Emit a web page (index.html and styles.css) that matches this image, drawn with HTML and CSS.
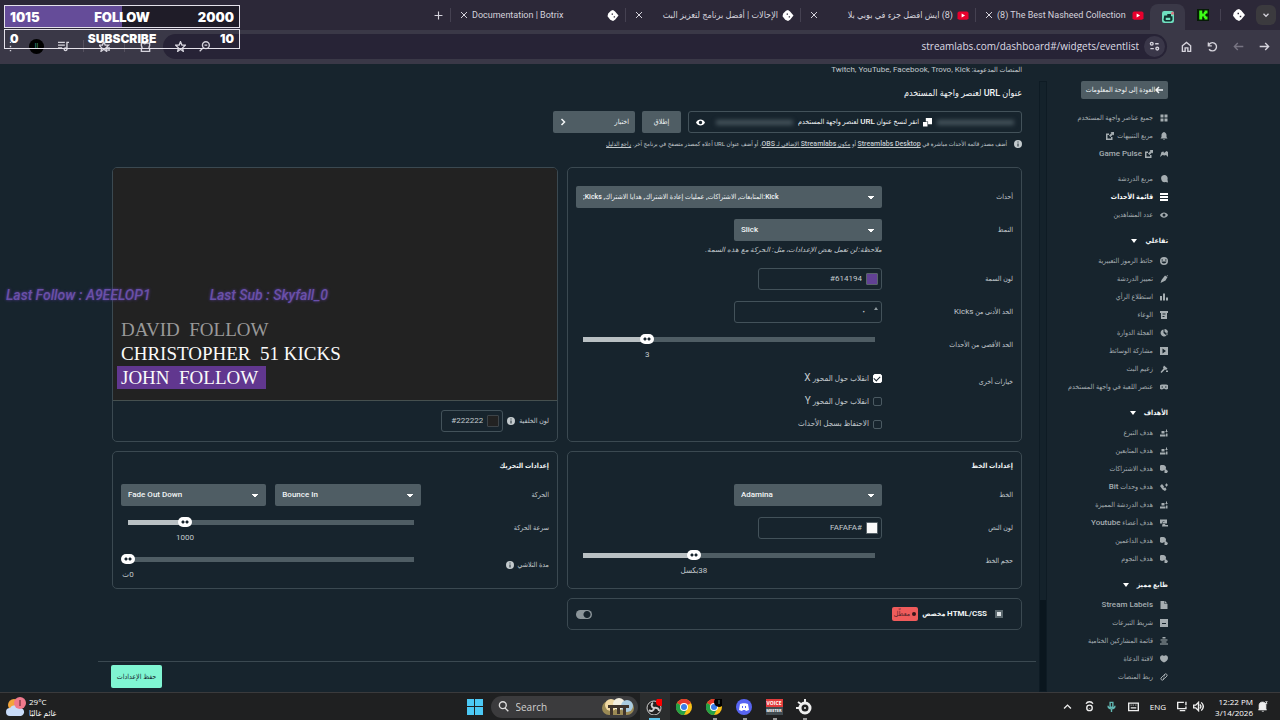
FILE: index.html
```html
<!DOCTYPE html>
<html lang="ar" dir="rtl">
<head>
    <meta charset="UTF-8">
    <meta name="viewport" content="width=device-width, initial-scale=1.0">
    <title>Streamlabs - قائمة الأحداث</title>
    <link rel="stylesheet" href="styles.css">
</head>
<body>
    <svg class="symbols" aria-hidden="true">
        <symbol id="i-grid" viewBox="0 0 16 16"><path d="M1 1h6v6H1zM9 1h6v6H9zM1 9h6v6H1zM9 9h6v6H9z"/></symbol>
        <symbol id="i-bell" viewBox="0 0 16 16"><path d="M8 0c3 1 5 3 5 6v4l2 3H1l2-3V6c0-3 2-5 5-6zM6 14h4l-2 2z"/></symbol>
        <symbol id="i-game" viewBox="0 0 16 16"><path d="M0 14 3 4l4-1 1 3 5-4 3 2v10l-4-4-3 1-4-1z"/></symbol>
        <symbol id="i-chat" viewBox="0 0 16 16"><path d="M8 0a7 7 0 0 1 7 9l1 6-5-1A7 7 0 1 1 8 0z"/></symbol>
        <symbol id="i-list" viewBox="0 0 16 16"><path d="M0 0h16v4H0zM0 6h16v4H0zM0 12h16v4H0z"/></symbol>
        <symbol id="i-eye" viewBox="0 0 16 16"><path fill-rule="evenodd" d="M0 8c3-7 13-7 16 0-3 7-13 7-16 0zm5 0a3 3 0 1 0 6 0 3 3 0 0 0-6 0z"/></symbol>
        <symbol id="i-smile" viewBox="0 0 16 16"><path fill-rule="evenodd" d="M8 0a8 8 0 1 1 0 16A8 8 0 0 1 8 0zM3 5v2h3V5zm7 0v2h3V5zM3 9c1 5 9 5 10 0z"/></symbol>
        <symbol id="i-pen" viewBox="0 0 16 16"><path d="m10 1 5 3-4 7-6 3-4 2 2-6zM15 0l1 3-3-2z"/></symbol>
        <symbol id="i-bars" viewBox="0 0 16 16"><path d="M0 6h4v9H0zM6 1h4v14H6zM12 9h4v6h-4z"/></symbol>
        <symbol id="i-jar" viewBox="0 0 16 16"><path fill-rule="evenodd" d="M0 0h16v4h-2v12H2V4H0zm5 5v2h6V5zm0 5v2h4v-2z"/></symbol>
        <symbol id="i-wheel" viewBox="0 0 16 16"><path d="M7 1v7l6 5A7 7 0 1 1 7 1zM9 0c4 0 7 3 7 7l-4 1-3-3zM12 9h4l-2 4z"/></symbol>
        <symbol id="i-play" viewBox="0 0 16 16"><path fill-rule="evenodd" d="M0 0h16v16H0zm5 3v10l7-5z"/></symbol>
        <symbol id="i-axe" viewBox="0 0 16 16"><path d="m8 1 7 6-3 3-2-1-7 7-2-2 6-7-1-2zM12 11h4v3h-4z"/></symbol>
        <symbol id="i-pad" viewBox="0 0 16 16"><path fill-rule="evenodd" d="M4 3h8a5 5 0 0 1 0 10L8 11l-4 2A5 5 0 0 1 4 3zM3 7v2h3V7zm7 0v2h3V7z"/></symbol>
        <symbol id="i-goal" viewBox="0 0 16 16"><path d="M3 4h6v5H3zM0 11h11v4H0zM12 1h2v3h2l-3 3-3-3h2zM12 9h3v6h-3z"/></symbol>
        <symbol id="i-coins" viewBox="0 0 16 16"><path d="M6 0a6 6 0 0 1 6 7l-5 4A6 6 0 1 1 6 0zM9 9l3-1 1 2 3 2-2 4H9z"/></symbol>
        <symbol id="i-bits" viewBox="0 0 16 16"><path d="m4 2 4 5-1 3 4-1 2 4-3 3-5-3-5-7zM12 1h2v2h2v2h-2v2h-2V5h-2V3h2z"/></symbol>
        <symbol id="i-member" viewBox="0 0 16 16"><path d="M0 1h14v8H9V5H5v4H0zM6 6h3v3H6zM5 10h5l1 2h5v3H4z"/></symbol>
        <symbol id="i-page" viewBox="0 0 16 16"><path d="M1 0h8v6h6v10H1zM10 0l5 5h-5z"/></symbol>
        <symbol id="i-box" viewBox="0 0 16 16"><path fill-rule="evenodd" d="M0 0h16v16H0zm4 8v2h8V8z"/></symbol>
        <symbol id="i-credits" viewBox="0 0 16 16"><path d="M5 0h6v3H5zM1 5h14v2H1zM3 9h10v2H3zM0 13h16v2H0z"/></symbol>
        <symbol id="i-heart" viewBox="0 0 16 16"><path d="M8 2c3-3 8-1 8 4 0 4-4 7-8 9C4 13 0 10 0 6c0-5 5-7 8-4z"/></symbol>
        <symbol id="i-link" viewBox="0 0 16 16"><path fill="none" stroke="currentColor" stroke-width="2" d="M7 5l3-3a3 3 0 0 1 4 4l-4 4a3 3 0 0 1-4 0M9 11l-3 3a3 3 0 0 1-4-4l4-4a3 3 0 0 1 4 0"/></symbol>
        <symbol id="i-ext" viewBox="0 0 16 16"><path d="M9 0h7v7l-2-2-5 5-3-3 5-5zM0 3h6v3H3v7h7v-3h3v6H0z"/></symbol>
        <symbol id="i-copy" viewBox="0 0 16 16"><path d="M5 0h11v11H9V6H5zM0 7h8v8H0z"/></symbol>
        <symbol id="i-info" viewBox="0 0 16 16"><path fill-rule="evenodd" d="M8 0a8 8 0 1 1 0 16A8 8 0 0 1 8 0zM7 3v2h2V3zm0 4v6h2V7z"/></symbol>
        <symbol id="i-x" viewBox="0 0 16 16"><path fill="none" stroke="currentColor" stroke-width="2" d="m2 2 12 12M14 2 2 14"/></symbol>
        <symbol id="i-botrix" viewBox="0 0 16 16"><path fill-rule="evenodd" d="m8 0 3 2 5 6-5 6-3 2-4-2-4-5 1-4 4-4zM6 5v2h2V5zm3 4v2h2V9z"/></symbol>
        <symbol id="i-yt" viewBox="0 0 16 16"><path fill="#e8002d" d="M2 2h12l2 2v8l-2 2H2l-2-2V4z"/><path fill="#fff" d="M6 5v6l5-3z"/></symbol>
        <symbol id="i-chrome" viewBox="0 0 16 16"><circle cx="8" cy="8" r="8" fill="#fbc116"/><path fill="#e33b2e" d="M8 8 1 4a8 8 0 0 1 14 0z"/><path fill="#24a148" d="M1 4a8 8 0 0 0 7 12l3-6z"/><circle cx="8" cy="8" r="4" fill="#fff"/><circle cx="8" cy="8" r="3" fill="#3b7de9"/></symbol>
    </svg>

    <header class="browser">
        <nav class="tabs">
            <button class="tab-menu" aria-label="البحث في علامات التبويب"><svg viewBox="0 0 16 16"><path fill="none" stroke="currentColor" stroke-width="2" d="m4 6 4 4 4-4"/></svg></button>
            <a href="#" class="tab-pin"><svg><use href="#i-botrix"/></svg></a>
            <i class="tab-sep"></i>
            <a href="#" class="tab-pin"><svg viewBox="0 0 16 16"><path fill="#061b06" d="M0 0h16v16H0z"/><path fill="#3dfc16" d="M3 2h4v4h2V4h1V2h4v4h-2v1h-1v2h1v1h2v4h-4v-2H9v-2H7v4H3z"/></svg></a>
            <a href="#" class="tab-pin active"><svg viewBox="0 0 16 16"><rect width="16" height="16" rx="3" fill="#6fe0c0"/><path fill="#12332f" fill-rule="evenodd" d="M3 6h4V4h5v3h2v5l-2 2H4l-2-2zm2 3v3h6V9z"/><circle cx="14" cy="3" r="2" fill="#d97580"/></svg></a>
            <div class="tab"><svg class="fav"><use href="#i-yt"/></svg><a href="#" dir="ltr">(8) The Best Nasheed Collection</a><button aria-label="إغلاق"><svg><use href="#i-x"/></svg></button></div>
            <div class="tab"><svg class="fav"><use href="#i-yt"/></svg><a href="#">(8) ايش افضل جزء في بوبي بلا</a><button aria-label="إغلاق"><svg><use href="#i-x"/></svg></button></div>
            <div class="tab"><svg class="fav"><use href="#i-botrix"/></svg><a href="#">الإحالات | أفضل برنامج لتعزيز البث</a><button aria-label="إغلاق"><svg><use href="#i-x"/></svg></button></div>
            <div class="tab"><svg class="fav"><use href="#i-botrix"/></svg><a href="#" dir="ltr">Documentation | Botrix</a><button aria-label="إغلاق"><svg><use href="#i-x"/></svg></button></div>
            <button class="tab-new" aria-label="علامة تبويب جديدة"><svg viewBox="0 0 16 16"><path fill="none" stroke="currentColor" stroke-width="2" d="M8 1v14M1 8h14"/></svg></button>
        </nav>
        <div class="toolbar">
            <button aria-label="رجوع"><svg viewBox="0 0 16 16"><path d="M1 8h13M9 3l5 5-5 5"/></svg></button>
            <button class="dim" aria-label="تقدم"><svg viewBox="0 0 16 16"><path d="M15 8H2M7 3 2 8l5 5"/></svg></button>
            <button aria-label="إعادة التحميل"><svg viewBox="0 0 16 16"><path d="M2 2v5h5M2 7a6 6 0 1 1 1 5"/></svg></button>
            <button aria-label="الصفحة الرئيسية"><svg viewBox="0 0 16 16"><path d="M2 7l6-5 6 5v8h-4v-5H6v5H2z"/></svg></button>
            <div class="omnibox">
                <button class="site" aria-label="معلومات الموقع"><svg viewBox="0 0 16 16"><circle cx="4" cy="4" r="2"/><path d="M9 4h5M2 11h5"/><circle cx="12" cy="11" r="2"/></svg></button>
                <input type="text" dir="ltr" aria-label="العنوان" value="streamlabs.com/dashboard#/widgets/eventlist">
                <button aria-label="تصغير"><svg viewBox="0 0 16 16"><circle cx="10" cy="6" r="5"/><path d="M8 6h4M6 10l-5 5"/></svg></button>
                <button aria-label="إشارة مرجعية"><svg viewBox="0 0 16 16"><path d="m8 1 2 5h5l-4 4 1 5-4-3-4 3 1-5-4-4h5z"/></svg></button>
            </div>
            <div class="extras">
                <button aria-label="الإضافات"><svg viewBox="0 0 16 16"><path d="M2 3h3l2 1 2-1h5v4l-1 2 1 2v4H2v-4l1-2-1-2z"/></svg></button>
                <i></i>
                <button aria-label="المفضلة"><svg viewBox="0 0 16 16"><path d="m7 1 2 5h5l-4 4 1 5-4-3-4 3 1-5-4-4h5zM11 10h5M12 13h4"/></svg></button>
                <i></i>
                <button aria-label="الوسائط"><svg viewBox="0 0 16 16"><path d="M0 2h10M0 6h10M0 10h6M13 12V2h3"/><circle cx="11" cy="12" r="2"/></svg></button>
                <button class="avatar" aria-label="الملف الشخصي">ll</button>
                <button class="menu" aria-label="القائمة"><svg viewBox="0 0 16 16"><path d="M8 1v2M8 7v2M8 13v2"/></svg></button>
            </div>
        </div>
    </header>

    <div class="page">
        <aside class="sidebar">
            <button class="back"><svg viewBox="0 0 16 16"><path fill="none" stroke="currentColor" stroke-width="3" d="M16 8H3M8 2 2 8l6 6"/></svg>العودة إلى لوحة المعلومات</button>
            <ul>
                <li><a href="#"><svg><use href="#i-grid"/></svg>جميع عناصر واجهة المستخدم</a></li>
                <li><a href="#"><svg><use href="#i-bell"/></svg>مربع التنبيهات <svg class="ext"><use href="#i-ext"/></svg></a></li>
                <li><a href="#"><svg><use href="#i-game"/></svg><svg><use href="#i-ext"/></svg><span class="en pulse">Game Pulse</span></a></li>
            </ul>
            <ul>
                <li><a href="#"><svg><use href="#i-chat"/></svg>مربع الدردشة</a></li>
                <li><a href="#" class="current"><svg><use href="#i-list"/></svg>قائمة الأحداث</a></li>
                <li><a href="#"><svg><use href="#i-eye"/></svg>عدد المشاهدين</a></li>
            </ul>
            <h2>تفاعلي</h2>
            <ul>
                <li><a href="#"><svg><use href="#i-smile"/></svg>حائط الرموز التعبيرية</a></li>
                <li><a href="#"><svg><use href="#i-pen"/></svg>تمييز الدردشة</a></li>
                <li><a href="#"><svg><use href="#i-bars"/></svg>استطلاع الرأي</a></li>
                <li><a href="#"><svg><use href="#i-jar"/></svg>الوعاء</a></li>
                <li><a href="#"><svg><use href="#i-wheel"/></svg>العجلة الدوارة</a></li>
                <li><a href="#"><svg><use href="#i-play"/></svg>مشاركة الوسائط</a></li>
                <li><a href="#"><svg><use href="#i-axe"/></svg>زعيم البث</a></li>
                <li><a href="#"><svg><use href="#i-pad"/></svg>عنصر اللعبة في واجهة المستخدم</a></li>
            </ul>
            <h2>الأهداف</h2>
            <ul>
                <li><a href="#"><svg><use href="#i-goal"/></svg>هدف التبرع</a></li>
                <li><a href="#"><svg><use href="#i-goal"/></svg>هدف المتابعين</a></li>
                <li><a href="#"><svg><use href="#i-coins"/></svg>هدف الاشتراكات</a></li>
                <li><a href="#"><svg><use href="#i-bits"/></svg><span>هدف وحدات <span class="en">Bit</span></span></a></li>
                <li><a href="#"><svg><use href="#i-goal"/></svg>هدف الدردشة المميزة</a></li>
                <li><a href="#"><svg><use href="#i-member"/></svg><span>هدف أعضاء <span class="en">Youtube</span></span></a></li>
                <li><a href="#"><svg><use href="#i-coins"/></svg>هدف الداعمين</a></li>
                <li><a href="#"><svg><use href="#i-coins"/></svg>هدف النجوم</a></li>
            </ul>
            <h2>طابع مميز</h2>
            <ul>
                <li><a href="#"><svg><use href="#i-page"/></svg><span class="en">Stream Labels</span></a></li>
                <li><a href="#"><svg><use href="#i-box"/></svg>شريط التبرعات</a></li>
                <li><a href="#"><svg><use href="#i-credits"/></svg>قائمة المشاركين الختامية</a></li>
                <li><a href="#"><svg><use href="#i-heart"/></svg>لافتة الدعاة</a></li>
                <li><a href="#"><svg><use href="#i-link"/></svg>ربط المنصات</a></li>
            </ul>
        </aside>
        <div class="scrollbar"></div>

        <main class="content">
            <p class="platforms">المنصات المدعومة: <span class="en">Twitch, YouTube, Facebook, Trovo, Kick</span></p>
            <h1>عنوان URL لعنصر واجهة المستخدم</h1>
            <div class="url-row">
                <div class="url-box">
                    <i class="secret"></i>
                    <button class="copy"><svg><use href="#i-copy"/></svg><span>انقر لنسخ عنوان <span class="en">URL</span> لعنصر واجهة المستخدم</span></button>
                    <i class="secret"></i>
                    <button class="show" aria-label="إظهار"><svg><use href="#i-eye"/></svg></button>
                </div>
                <button class="btn launch">إطلاق</button>
                <button class="btn test">اختبار<svg viewBox="0 0 16 16"><path fill="none" stroke="currentColor" stroke-width="3" d="m5 2 6 6-6 6"/></svg></button>
            </div>
            <p class="hint"><svg><use href="#i-info"/></svg><span>أضف مصدر قائمة الأحداث مباشرة في <a href="#"><b>Streamlabs Desktop</b></a> أو <a href="#">مكون <b>Streamlabs</b> الإضافي لـ <b>OBS</b></a>، أو أضف عنوان URL أعلاه كمصدر متصفح في برنامج آخر. <a href="#">راجع الدليل</a></span></p>

            <div class="panels">
                <section class="panel">
                    <div class="row">
                        <label for="events">أحداث</label>
                        <div class="field"><select id="events" class="events"><option>Kick:المتابعات, الاشتراكات, عمليات إعادة الاشتراك, هدايا الاشتراك, Kicks;</option></select></div>
                    </div>
                    <div class="row">
                        <label for="theme">النمط</label>
                        <div class="field">
                            <select id="theme" class="half" dir="ltr"><option>Slick</option></select>
                            <p class="note">ملاحظة: لن تعمل بعض الإعدادات، مثل: الحركة مع هذه السمة.</p>
                        </div>
                    </div>
                    <div class="row">
                        <label for="themeColor">لون السمة</label>
                        <div class="field"><div class="color"><i class="swatch theme"></i><input id="themeColor" type="text" value="#614194"></div></div>
                    </div>
                    <div class="row">
                        <label for="minKicks">الحد الأدنى من <span class="en">Kicks</span></label>
                        <div class="field"><div class="number"><i class="spin"></i><input id="minKicks" type="text" value="٠"></div></div>
                    </div>
                    <div class="row">
                        <label for="maxEvents">الحد الأقصى من الأحداث</label>
                        <div class="field slider" dir="ltr" style="--fill: 22%"><input id="maxEvents" type="range" min="0" max="100" value="22"><output>3</output></div>
                    </div>
                    <div class="row">
                        <span class="label">خيارات أخرى</span>
                        <div class="field checks">
                            <label><input type="checkbox" checked><span>انقلاب حول المحور <span class="axis">X</span></span></label>
                            <label><input type="checkbox"><span>انقلاب حول المحور <span class="axis">Y</span></span></label>
                            <label><input type="checkbox">الاحتفاظ بسجل الأحداث</label>
                        </div>
                    </div>
                </section>

                <section class="panel preview">
                    <div class="stage" dir="ltr">
                        <p class="old">DAVID&nbsp; FOLLOW</p>
                        <p>CHRISTOPHER&nbsp; 51 KICKS</p>
                        <p class="new">JOHN&nbsp; FOLLOW</p>
                    </div>
                    <div class="stage-bar">
                        <label for="bgColor">لون الخلفية</label>
                        <svg><use href="#i-info"/></svg>
                        <div class="color small"><i class="swatch bg"></i><input id="bgColor" type="text" value="#222222"></div>
                    </div>
                </section>

                <section class="panel titled">
                    <h3>إعدادات الخط</h3>
                    <div class="row">
                        <label for="font">الخط</label>
                        <div class="field"><select id="font" class="half" dir="ltr"><option>Adamina</option></select></div>
                    </div>
                    <div class="row">
                        <label for="textColor">لون النص</label>
                        <div class="field"><div class="color"><i class="swatch text"></i><input id="textColor" type="text" value="#FAFAFA"></div></div>
                    </div>
                    <div class="row">
                        <label for="fontSize">حجم الخط</label>
                        <div class="field slider" dir="ltr" style="--fill: 38%"><input id="fontSize" type="range" min="0" max="100" value="38"><output dir="rtl">38بكسل</output></div>
                    </div>
                </section>

                <section class="panel titled">
                    <h3>إعدادات التحريك</h3>
                    <div class="row">
                        <label for="animIn">الحركة</label>
                        <div class="field pair">
                            <select id="animIn" dir="ltr"><option>Bounce In</option></select>
                            <select aria-label="حركة الخروج" dir="ltr"><option>Fade Out Down</option></select>
                        </div>
                    </div>
                    <div class="row">
                        <label for="speed">سرعة الحركة</label>
                        <div class="field slider" dir="ltr" style="--fill: 20%"><input id="speed" type="range" min="0" max="100" value="20"><output>1000</output></div>
                    </div>
                    <div class="row">
                        <label for="fadeTime">مدة التلاشي <svg><use href="#i-info"/></svg></label>
                        <div class="field slider" dir="ltr" style="--fill: 0%"><input id="fadeTime" type="range" min="0" max="100" value="0"><output dir="rtl">0ث</output></div>
                    </div>
                </section>

                <section class="panel custom">
                    <i class="plus"></i>
                    <label for="customCode"><span class="en">HTML/CSS</span> مخصص</label>
                    <span class="badge">معطّل</span>
                    <input id="customCode" type="checkbox" class="switch">
                </section>
            </div>

            <footer class="save-bar"><button class="save">حفظ الإعدادات</button></footer>
        </main>
    </div>

    <footer class="taskbar" dir="ltr">
        <div class="weather">
            <svg viewBox="0 0 20 20"><circle cx="8" cy="8" r="6" fill="#f3a43b"/><path fill="#c9dcfa" d="M4 19a4 4 0 0 1 0-8 5 5 0 0 1 9 0 4 4 0 0 1 2 8z"/><circle cx="14" cy="6" r="6" fill="#f0798d"/><path stroke="#54202b" d="M14 3v6"/></svg>
            <div><b>29°C</b><span>غائم غالبًا</span></div>
        </div>
        <div class="apps">
            <button aria-label="Start"><svg viewBox="0 0 16 16"><path fill="#4cc9f5" d="M0 0h7v7H0zM8 0h8v7H8zM0 8h7v8H0zM8 8h8v8H8z"/></svg></button>
            <div class="search">
                <svg viewBox="0 0 16 16"><circle cx="7" cy="6" r="5" fill="none" stroke="#ddd" stroke-width="2"/><path stroke="#ddd" stroke-width="2" d="m10 10 5 5"/></svg>
                <input type="text" placeholder="Search" aria-label="Search">
                <svg class="art" viewBox="0 0 32 18"><rect y="3" width="32" height="14" rx="7" fill="#9b8a55"/><circle cx="9" cy="7" r="6" fill="#f0d9a4"/><circle cx="17" cy="6" r="6" fill="#f4efe0"/><circle cx="25" cy="8" r="6" fill="#a9cbe0"/><path fill="#3f342c" d="M6 7h21v3h-3v7h-3v-7h-3v6h-3v-6h-4v7H8v-7H6z"/></svg>
            </div>
            <button class="open" aria-label="OBS"><svg viewBox="0 0 16 16"><circle cx="8" cy="9" r="7" fill="#222" stroke="#ccc"/><path fill="none" stroke="#ccc" stroke-width="2" d="M8 9c-3-1-3-4-1-5M8 9c3-1 5 1 5 3M8 9c0 3-3 4-5 2"/><circle cx="14" cy="3" r="4" fill="#f00"/></svg></button>
            <button aria-label="Chrome"><svg><use href="#i-chrome"/></svg></button>
            <button class="running" aria-label="Chrome 2"><svg viewBox="0 0 16 16"><use href="#i-chrome"/><circle cx="13" cy="3" r="5" fill="#000"/><path stroke="#4d8276" d="M13 1v4"/></svg></button>
            <button class="running" aria-label="Discord"><svg viewBox="0 0 16 16"><circle cx="8" cy="8" r="8" fill="#5865f2"/><path fill="#fff" fill-rule="evenodd" d="M4 5c2-1 6-1 8 0l1 6-3 1-1-1H7l-1 1-3-1zm2 2v2h1V7zm3 0v2h1V7z"/></svg></button>
            <button class="running vm" aria-label="Voicemeeter"><b>VOICE</b><b>MEETER</b></button>
            <button class="running" aria-label="SteelSeries"><svg viewBox="0 0 16 16"><circle cx="9" cy="9" r="5" fill="none" stroke="#eee" stroke-width="3"/><circle cx="9" cy="9" r="1" fill="#eee"/><path stroke="#eee" stroke-width="2" d="M9 0v4M0 9h4M2 3l3 2"/></svg></button>
        </div>
        <div class="tray">
            <svg viewBox="0 0 16 16"><path d="m3 11 5-5 5 5"/></svg>
            <svg viewBox="0 0 16 16"><circle cx="8" cy="10" r="4"/><path d="M3 4c2-4 8-4 10 0M8 10v1"/></svg>
            <svg class="mic" viewBox="0 0 16 16"><path d="M6 2h4v7H6zM3 7c0 6 10 6 10 0M8 12v4"/></svg>
            <svg viewBox="0 0 16 16"><path d="M1 3h14v11H1zM4 6h1M7 6h1M11 6h1M4 10h8"/></svg>
            <span class="lang">ENG</span>
            <svg viewBox="0 0 16 16"><path d="M10 2H1v9h12V8M4 14h8M13 1v5"/></svg>
            <svg class="volume" viewBox="0 0 16 16"><path d="M1 6h3l4-4v12l-4-4H1zM10 5c2 2 2 4 0 6M12 2c4 4 4 8 0 12"/></svg>
            <div class="clock"><span>12:22 PM</span><span>3/14/2026</span></div>
            <svg class="notify" viewBox="0 0 16 16"><path fill="#eee" d="M3 12V6c0-6 10-6 10 0v6l1 1H2zM7 15h3M12 1h3l-3 3h3"/></svg>
        </div>
    </footer>

    <!-- stream overlay -->
    <div class="goals" dir="ltr">
        <div class="goal follow"><b>1015</b><b>FOLLOW</b><b>2000</b></div>
        <div class="goal subs"><b>0</b><b>SUBSCRIBE</b><b>10</b></div>
    </div>
    <div class="latest" dir="ltr"><span>Last Follow : A9EELOP1</span><span>Last Sub : Skyfall_0</span></div>
</body>
</html>
```
FILE: styles.css
```css
* {
    box-sizing: border-box;
}
body {
    margin: 0;
    min-height: 100vh;
    display: flex;
    flex-direction: column;
    background: #17242d;
    color: #c3cacd;
    font-family: Roboto, "DejaVu Sans Condensed", "DejaVu Sans", sans-serif;
    font-size: 7px;
    line-height: 12px;
}
h1, h2, h3, p, ul {
    margin: 0;
    padding: 0;
}
ul {
    list-style: none;
}
a {
    color: inherit;
}
button, input, select {
    font: inherit;
    color: inherit;
    margin: 0;
    padding: 0;
    border: 0;
    background: none;
}
input {
    min-width: 0;
}
svg {
    fill: currentColor;
    flex: none;
}
.symbols {
    position: absolute;
    width: 0;
    height: 0;
}
.en {
    font-size: 8px;
}

/* browser */
.browser {
    background: #3a3847;
    color: #d5d3dc;
}
.tabs {
    height: 30px;
    display: flex;
    align-items: center;
    background: #2c2838;
    padding-right: 4px;
    font-size: 9px;
}
.tabs button, .toolbar button {
    display: flex;
    align-items: center;
    justify-content: center;
}
.tabs svg {
    width: 10px;
    height: 10px;
}
.tab-menu {
    width: 20px;
    height: 20px;
    border-radius: 6px;
    background: #3b3a3e;
}
.tab-pin {
    width: 35px;
    height: 26px;
    display: flex;
    align-items: center;
    justify-content: center;
    color: #fff;
}
.tab-pin svg {
    width: 12px;
    height: 12px;
}
.tab-sep {
    width: 1px;
    height: 12px;
    background: #454151;
}
.tab-pin.active {
    background: #3a3847;
    border-radius: 8px 8px 0 0;
    align-self: flex-end;
}
.tab {
    flex: 0 1 175px;
    min-width: 0;
    display: flex;
    align-items: center;
    gap: 4px;
    padding: 0 6px 0 9px;
    height: 14px;
    border-left: 1px solid #454151;
}
.tab .fav {
    width: 12px;
    height: 11px;
    color: #fff;
}
.tab a {
    flex: 1;
    min-width: 0;
    overflow: hidden;
    white-space: nowrap;
    text-decoration: none;
    line-height: 16px;
}
.tab button svg {
    width: 8px;
    height: 8px;
}
.tab-new {
    width: 24px;
}
.tab-new svg {
    width: 9px;
    height: 9px;
}
.toolbar {
    height: 34px;
    display: flex;
    align-items: center;
    padding: 0 3px 2px 0;
}
.toolbar button {
    width: 26px;
    height: 24px;
}
.toolbar svg {
    width: 11px;
    height: 11px;
    fill: none;
    stroke: currentColor;
    stroke-width: 2;
}
.toolbar .dim {
    color: #777482;
}
.omnibox {
    flex: 1;
    display: flex;
    align-items: center;
    height: 25px;
    margin-right: 6px;
    padding: 0 2px 0 5px;
    border-radius: 13px;
    background: #272336;
}
.omnibox input {
    flex: 1;
    text-align: right;
    padding-right: 5px;
    color: #dddbe4;
    font-family: "Open Sans", sans-serif;
    font-size: 10px;
}
.omnibox button {
    width: 24px;
}
.omnibox .site {
    width: 21px;
    height: 21px;
    border-radius: 50%;
    background: #3a3749;
}
.extras {
    display: flex;
    align-items: center;
    padding-right: 5px;
}
.extras i {
    width: 1px;
    height: 12px;
    margin: 0 7px;
    background: #55515f;
}
.extras .avatar {
    width: 15px;
    height: 15px;
    margin: 0 6px 0 9px;
    border-radius: 50%;
    background: #000;
    color: #3c9c7e;
}
.extras .menu {
    width: 20px;
}

/* page */
.page {
    flex: 1;
    display: flex;
}
.sidebar {
    width: 233px;
    padding: 17px 112px 5px 0;
    white-space: nowrap;
    color: #a5adb1;
}
.sidebar .back {
    display: flex;
    align-items: center;
    justify-content: center;
    width: 87px;
    height: 18px;
    margin-bottom: 3px;
    border-radius: 2px;
    background: #4f5d64;
    color: #f2f5f6;
    font-weight: 500;
}
.sidebar ul {
    padding-top: 7px;
}
.sidebar h2 + ul {
    padding-top: 2px;
}
.sidebar li a {
    display: flex;
    align-items: center;
    gap: 7px;
    height: 18px;
    font-weight: 500;
    text-decoration: none;
}
.sidebar svg {
    width: 8px;
    height: 8px;
}
.sidebar .ext, .sidebar .pulse {
    margin-right: -4px;
}
.sidebar .current {
    color: #fff;
    font-weight: 700;
}
.sidebar h2 {
    display: flex;
    align-items: center;
    gap: 8px;
    height: 18px;
    margin-top: 8px;
    color: #f2f5f6;
    font-size: 7px;
    font-weight: 700;
}
.sidebar h2::after {
    content: "";
    border: 3px solid transparent;
    border-top: 4px solid #fff;
    border-bottom: 0;
}
.scrollbar {
    width: 8px;
    margin: 17px 0 0 3px;
    background: linear-gradient(#14222b 518px, #0a161e 518px);
    border: 1px solid #0e1b24;
}
.content {
    flex: 1;
    min-width: 0;
    display: flex;
    flex-direction: column;
    margin-left: 98px;
}
.platforms, .content h1, .url-row, .hint, .panels {
    margin-right: 14px;
    margin-left: 14px;
}
.content h1 {
    margin-top: 9px;
    margin-bottom: 10px;
    color: #f2f5f6;
    font-size: 9px;
    line-height: 16px;
    font-weight: 500;
}
.url-row {
    display: flex;
    gap: 7px;
}
.url-box {
    flex: 0 0 334px;
    height: 22px;
    display: flex;
    align-items: center;
    gap: 5px;
    padding: 0 7px;
    border: 1px solid #43525a;
    border-radius: 3px;
}
.secret {
    flex: 1;
    height: 5px;
    background: #46545c;
    filter: blur(2px);
}
.copy {
    display: flex;
    align-items: center;
    gap: 4px;
    color: #f2f5f6;
    font-weight: 500;
}
.copy svg, .show svg {
    width: 9px;
    height: 9px;
    display: block;
    color: #fff;
}
.show {
    margin-right: 6px;
}
.btn {
    height: 22px;
    border-radius: 2px;
    background: #4f5d64;
    color: #f2f5f6;
    font-weight: 500;
}
.launch {
    width: 39px;
}
.test {
    width: 82px;
    display: flex;
    align-items: center;
    justify-content: space-between;
    padding: 0 6px;
}
.test svg {
    width: 8px;
    height: 8px;
}
.hint {
    display: flex;
    align-items: center;
    gap: 7px;
    height: 22px;
    font-size: 6px;
    white-space: nowrap;
}
.hint b {
    font-size: 7px;
    font-weight: 500;
}
.hint svg, .row label svg, .stage-bar svg {
    width: 8px;
    height: 8px;
    vertical-align: middle;
}
.panels {
    display: grid;
    grid-template-columns: 455fr 446fr;
    gap: 9px;
    margin-top: 12px;
}
.panel {
    border: 1px solid #3b4951;
    border-radius: 5px;
    padding: 18px 8px 10px;
    display: flex;
    flex-direction: column;
    gap: 11px;
}
.panel.titled {
    padding-top: 7px;
    padding-bottom: 8px;
}
.panel h3 {
    color: #f2f5f6;
    font-size: 7px;
    font-weight: 700;
    line-height: 14px;
}
.row {
    display: grid;
    grid-template-columns: 3fr 7fr;
}
.row > label, .row > .label {
    line-height: 22px;
}
.row label svg {
    margin-right: 2px;
}
select {
    appearance: none;
    display: block;
    width: 100%;
    height: 22px;
    padding: 0 7px;
    border-radius: 2px;
    background-color: #4f5d64;
    background-image: linear-gradient(45deg, transparent 50%, #fff 50%), linear-gradient(-45deg, transparent 50%, #fff 50%);
    background-size: 3px 4px;
    background-position: right 11px top 10px, right 8px top 10px;
    background-repeat: no-repeat;
    color: #f2f5f6;
    font-weight: 500;
}
select[dir="ltr"] {
    font-size: 8px;
}
.events {
    text-align-last: left;
}
.half, .number {
    width: 148px;
}
.pair {
    display: grid;
    grid-template-columns: 1fr 1fr;
    gap: 9px;
}
.note {
    margin-top: 3px;
    line-height: 13px;
    font-style: italic;
    white-space: nowrap;
}
.color, .number {
    display: flex;
    align-items: center;
    height: 22px;
    border: 1px solid #43525a;
    border-radius: 3px;
    padding: 0 3px;
}
.color {
    width: 124px;
    gap: 4px;
}
.color input, .number input {
    flex: 1;
    font-size: 8px;
}
.color.small {
    width: 62px;
}
.swatch {
    width: 12px;
    height: 12px;
    flex: none;
    border-radius: 1px;
    border: 1px solid #59646a;
}
.swatch.theme {
    background: #614194;
}
.swatch.bg {
    background: #222;
    border-color: #3d4449;
}
.swatch.text {
    background: #fafafa;
}
.number {
    gap: 8px;
}
.number input {
    font-weight: 700;
}
.spin {
    margin-bottom: 8px;
    border: 2px solid transparent;
    border-top: 0;
    border-bottom: 3px solid #8f999e;
}
.slider {
    padding: 0 7px;
    height: 26px;
}
.slider input {
    appearance: none;
    display: block;
    width: calc(100% + 14px);
    height: 10px;
    margin: 0 -7px;
}
.slider input::-webkit-slider-runnable-track {
    height: 10px;
    background: linear-gradient(to right, #b9c0c3 var(--fill), #4f5d64 var(--fill)) center / calc(100% - 14px) 5px no-repeat;
}
.slider input::-webkit-slider-thumb {
    appearance: none;
    width: 14px;
    height: 10px;
    border-radius: 5px;
    background: radial-gradient(circle at 5px 5px, #17242d 1px, transparent 2px), radial-gradient(circle at 9px 5px, #17242d 1px, transparent 2px), #fff;
}
.slider output {
    display: block;
    width: 40px;
    margin-top: 5px;
    margin-left: calc(var(--fill) - 20px);
    font-size: 8px;
    text-align: center;
}
.checks {
    display: flex;
    flex-direction: column;
    align-items: flex-start;
    gap: 9px;
    font-size: 8px;
}
.checks label {
    display: flex;
    align-items: center;
    gap: 4px;
    height: 14px;
}
.checks .axis {
    font-size: 10px;
}
.checks input {
    appearance: none;
    width: 9px;
    height: 9px;
    border: 1px solid #4b5a62;
    border-radius: 2px;
}
.checks input:checked {
    background: #fff;
    border-color: #fff;
}
.checks input:checked::after {
    content: "";
    display: block;
    width: 3px;
    height: 5px;
    margin: 0 2px;
    border: solid #17242d;
    border-width: 0 1px 1px 0;
    rotate: 45deg;
}
.panel.preview {
    padding: 0;
    gap: 0;
    overflow: hidden;
}
.stage {
    flex: 1;
    display: flex;
    flex-direction: column;
    justify-content: flex-end;
    align-items: flex-start;
    padding: 0 4px 11px;
    background: #222;
    border-bottom: 1px solid #46504f;
    color: #fafafa;
    font-family: "Liberation Serif", serif;
    font-size: 19px;
    line-height: 24px;
}
.stage p {
    padding: 0 4px;
}
.stage .old {
    color: #999;
}
.stage .new {
    padding-right: 8px;
    background: #61378f;
    line-height: 23px;
}
.stage-bar {
    display: flex;
    align-items: center;
    gap: 4px;
    height: 40px;
    padding: 0 8px;
}
.panel.custom {
    flex-direction: row;
    align-items: center;
    gap: 4px;
    height: 32px;
    padding: 0 18px 0 8px;
    color: #f2f5f6;
}
.custom label {
    margin-right: 4px;
    font-weight: 700;
}
.plus {
    width: 8px;
    height: 8px;
    border: 2px solid #5b686e;
    background: #dfe4e6;
}
.badge {
    padding: 0 2px;
    border-radius: 2px;
    background: #ef5b5b;
    color: #51242a;
    line-height: 14px;
}
.badge::before {
    content: "";
    display: inline-block;
    width: 4px;
    height: 4px;
    margin-left: 2px;
    border-radius: 50%;
    background: #3a1519;
    vertical-align: middle;
}
.switch {
    appearance: none;
    width: 16px;
    height: 9px;
    margin-right: auto;
    border-radius: 5px;
    background: radial-gradient(circle at 11px 50%, #17242d 3px, transparent 4px), #8b959a;
}
.save-bar {
    margin-top: auto;
    height: 31px;
    padding: 3px 13px;
    border-top: 1px solid #3b4951;
    text-align: left;
}
.save {
    width: 51px;
    height: 23px;
    border-radius: 2px;
    background: #80f5d2;
    color: #17242d;
}

/* taskbar */
.taskbar {
    height: 28px;
    display: grid;
    grid-template-columns: 1fr auto 1fr;
    align-items: center;
    border-top: 1px solid #3a3a3c;
    background: #1f2021;
    color: #fff;
    font-family: "Open Sans", "DejaVu Sans Condensed", "DejaVu Sans", sans-serif;
    font-size: 8px;
}
.weather {
    display: flex;
    align-items: center;
    gap: 3px;
    padding-left: 6px;
}
.weather svg {
    width: 20px;
    height: 20px;
}
.weather b, .weather span, .clock span {
    display: block;
    line-height: 11px;
    font-weight: 500;
}
.apps {
    display: flex;
    align-items: center;
}
.apps button {
    position: relative;
    width: 30px;
    height: 27px;
    padding: 0 6px;
}
.apps button svg {
    display: block;
    width: 16px;
    height: 16px;
}
.apps .open {
    background: #2b2d2e;
}
.apps .running::after, .apps .open::after {
    content: "";
    position: absolute;
    bottom: 0;
    left: 13px;
    width: 4px;
    height: 2px;
    background: #999;
}
.apps .open::after {
    left: 9px;
    width: 11px;
    background: #5cc4ec;
}
.vm b {
    display: block;
    width: 17px;
    background: #e23c3c;
    font-size: 5px;
    line-height: 8px;
}
.vm b + b {
    background: #424b50;
    font-size: 4px;
}
.search {
    display: flex;
    align-items: center;
    gap: 7px;
    width: 147px;
    height: 22px;
    margin-right: 2px;
    padding: 0 4px 0 7px;
    border-radius: 11px;
    background: #3b3b3d;
}
.search svg {
    width: 11px;
    height: 11px;
}
.search input {
    flex: 1;
    font-size: 10px;
}
.search input::placeholder {
    color: #d0d0d0;
}
.search .art {
    width: 32px;
    height: 18px;
}
.tray {
    display: flex;
    align-items: center;
    justify-content: flex-end;
    gap: 11px;
    padding-right: 12px;
}
.tray svg {
    width: 11px;
    height: 11px;
    fill: none;
    stroke: #eee;
    stroke-width: 2;
}
.tray .mic {
    stroke: #62b8b4;
}
.tray .volume {
    margin-left: -6px;
}
.tray .notify {
    margin-left: -7px;
    stroke-width: 1;
}
.clock {
    text-align: right;
}

/* stream overlay */
.goals {
    position: absolute;
    top: 5px;
    left: 4px;
    width: 236px;
    color: #fff;
    font-family: Inter, sans-serif;
}
.goal {
    display: grid;
    grid-template-columns: 1fr auto 1fr;
    align-items: center;
    height: 23px;
    padding: 0 5px;
    border: 1px solid #e4e1ea;
    font-size: 13px;
}
.goal b {
    font-weight: 900;
}
.goal b:last-child {
    text-align: right;
}
.follow {
    background: linear-gradient(to right, #654c99 50%, #1f1c28 50%);
}
.subs {
    height: 20px;
    margin-top: 1px;
    font-size: 12px;
}
.latest {
    position: absolute;
    top: 287px;
    left: 6px;
    display: flex;
    gap: 59px;
    color: #6a50a8;
    font-size: 14px;
    font-weight: 500;
    font-style: italic;
    line-height: 16px;
    text-shadow: 0 0 3px #5b3fa0;
}
```
